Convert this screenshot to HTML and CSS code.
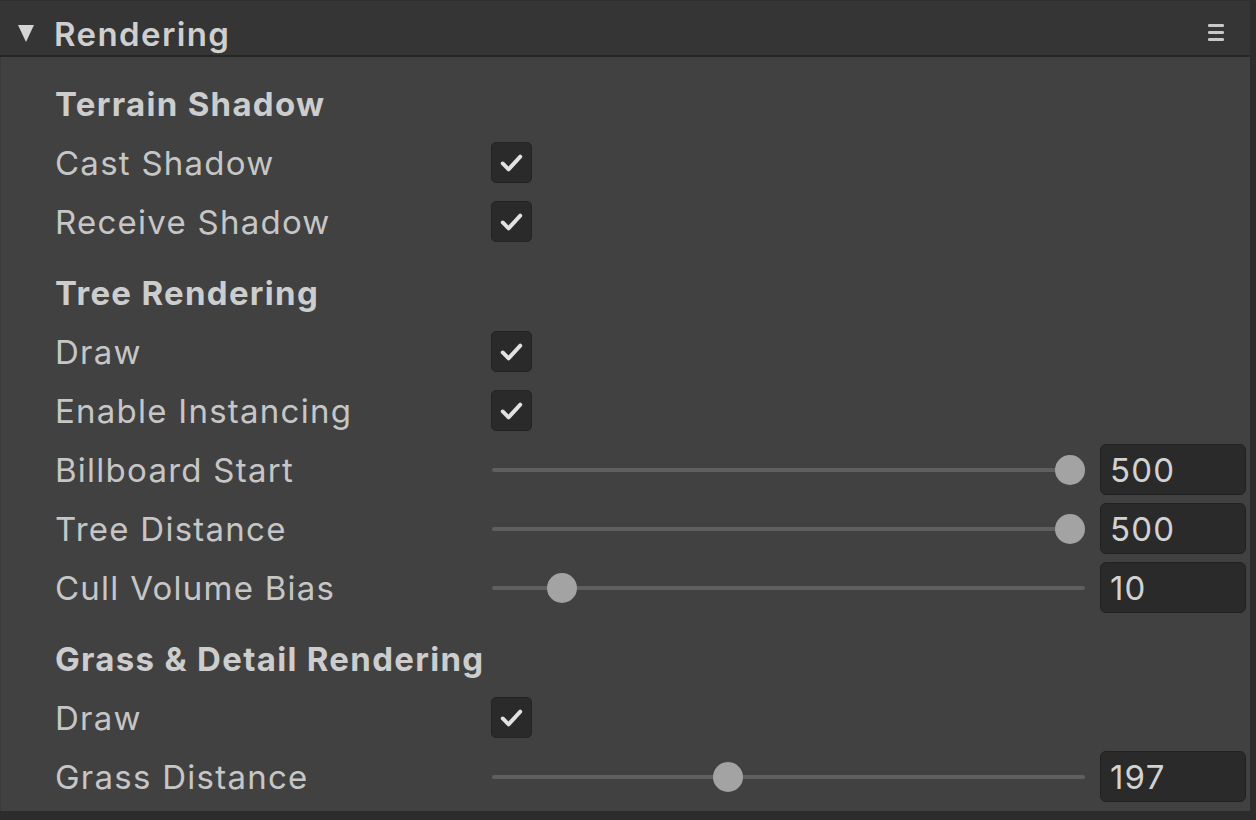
FILE: index.html
```html
<!DOCTYPE html>
<html lang="en">
<head>
<meta charset="utf-8">
<title>Rendering</title>
<link rel="stylesheet" href="styles.css">
</head>
<body>
<div class="panel">
  <div class="header">
    <svg class="foldout" width="18" height="19" viewBox="0 0 18 19"><polygon points="1,1 17,1 9,18" fill="#d4d4d4"/></svg>
    <span class="title">Rendering</span>
    <svg class="menu" width="18" height="20" viewBox="0 0 18 20"><rect x="1" y="2" width="16" height="3" rx="1.2" fill="#c8c8c8"/><rect x="1" y="9" width="16" height="3" rx="1.2" fill="#c8c8c8"/><rect x="1" y="16" width="16" height="3" rx="1.2" fill="#c8c8c8"/></svg>
  </div>
  <div class="body">
    <div class="row section"><span class="label bold">Terrain Shadow</span></div>
    <div class="row"><span class="label">Cast Shadow</span><span class="check"><svg viewBox="0 0 40 40"><path d="M11 21 L17 27 L29 14" /></svg></span></div>
    <div class="row"><span class="label">Receive Shadow</span><span class="check"><svg viewBox="0 0 40 40"><path d="M11 21 L17 27 L29 14" /></svg></span></div>

    <div class="row section gap"><span class="label bold">Tree Rendering</span></div>
    <div class="row"><span class="label">Draw</span><span class="check"><svg viewBox="0 0 40 40"><path d="M11 21 L17 27 L29 14" /></svg></span></div>
    <div class="row"><span class="label">Enable Instancing</span><span class="check"><svg viewBox="0 0 40 40"><path d="M11 21 L17 27 L29 14" /></svg></span></div>
    <div class="row"><span class="label">Billboard Start</span><div class="control"><div class="slider"><div class="track"></div><div class="thumb" style="--p:1"></div></div><div class="field">500</div></div></div>
    <div class="row"><span class="label">Tree Distance</span><div class="control"><div class="slider"><div class="track"></div><div class="thumb" style="--p:1"></div></div><div class="field">500</div></div></div>
    <div class="row"><span class="label">Cull Volume Bias</span><div class="control"><div class="slider"><div class="track"></div><div class="thumb" style="--p:0.1"></div></div><div class="field">10</div></div></div>

    <div class="row section gap"><span class="label bold">Grass &amp; Detail Rendering</span></div>
    <div class="row"><span class="label">Draw</span><span class="check"><svg viewBox="0 0 40 40"><path d="M11 21 L17 27 L29 14" /></svg></span></div>
    <div class="row"><span class="label">Grass Distance</span><div class="control"><div class="slider"><div class="track"></div><div class="thumb" style="--p:0.394"></div></div><div class="field">197</div></div></div>
  </div>
</div>
</body>
</html>
```
FILE: styles.css
```css
html, body {
  margin: 0;
  padding: 0;
  background: #2b2b2b;
}
body {
  width: 1256px;
  height: 820px;
  overflow: hidden;
  font-family: Inter, "Noto Sans", sans-serif;
  color: #c4c4c4;
}
.panel {
  width: 1250px;
  height: 811px;
  background: #414141;
  border-right: 6px solid #2c2c2c;
  border-bottom: 9px solid #2c2c2c;
  display: flex;
  flex-direction: column;
}
.header {
  box-sizing: border-box;
  height: 57px;
  padding-top: 11px;
  background: #353535;
  border-top: 1px solid #2e2e2e;
  border-bottom: 2px solid #262626;
  display: flex;
  align-items: center;
  padding-left: 17px;
  padding-right: 25px;
}
.foldout {
  margin-right: 19px;
  margin-top: -1px;
}
.title {
  font-size: 33px;
  font-weight: 600;
  letter-spacing: 1.4px;
  color: #cfcfcf;
  flex: 1;
}
.menu {
  margin-top: -3px;
}
.body {
  flex: 1;
  padding: 17px 4px 0 54px;
  border-left: 1px solid #3a3a3a;
}
.row {
  height: 59px;
  display: flex;
  align-items: center;
}
.row.gap {
  margin-top: 12px;
}
.label {
  width: 436px;
  flex: none;
  font-size: 33px;
  letter-spacing: 1.25px;
  white-space: nowrap;
  color: #c6c6c6;
}
.label.bold {
  font-weight: 700;
  letter-spacing: 1.3px;
  color: #cdcdcd;
}
.check {
  width: 39px;
  height: 39px;
  background: #2a2a2a;
  border: 1px solid #232323;
  border-radius: 5px;
  display: flex;
}
.check svg {
  width: 39px;
  height: 39px;
}
.check path {
  fill: none;
  stroke: #e2e2e2;
  stroke-width: 4;
  stroke-linecap: round;
  stroke-linejoin: round;
}
.control {
  flex: 1;
  display: flex;
  align-items: center;
  gap: 15px;
}
.slider {
  flex: 1;
  height: 32px;
  position: relative;
  display: flex;
  align-items: center;
}
.track {
  flex: 1;
  height: 4px;
  margin-left: 1px;
  background: #5f5f5f;
  border-radius: 2px;
}
.thumb {
  position: absolute;
  top: 1px;
  left: calc((100% - 30px) * var(--p));
  width: 30px;
  height: 30px;
  border-radius: 50%;
  background: #a3a3a3;
}
.field {
  height: 51px;
  box-sizing: border-box;
  width: 146px;
  background: #2a2a2a;
  border: 1px solid #212121;
  border-radius: 6px;
  padding-left: 9px;
  display: flex;
  align-items: center;
  font-size: 33px;
  letter-spacing: 1.2px;
  color: #d2d2d2;
}
```
